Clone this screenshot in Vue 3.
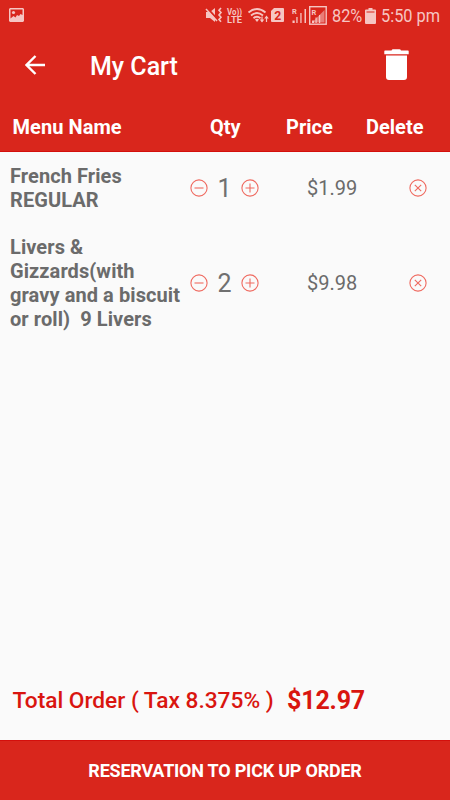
<template>
  <div class="app-container">
    <header class="top">
      <div class="status-bar">
        <svg class="picture" width="15" height="14" viewBox="0 0 15 14">
          <path fill-rule="evenodd" d="M1 0h13l1 1v12l-1 1H1l-1-1V1zM1.500 1.500v9l3-2.500 2 1.500L8 7l2 1 1.500-2 2 1V1.500z" />
          <circle cx="4.500" cy="4.500" r="1.600" />
        </svg>

        <svg class="indicators" width="124" height="20" viewBox="0 0 124 20">
          <!-- muted speaker -->
          <path d="M1 6h4l5-4v14l-5-4H1z" />
          <path class="cut" d="M1.500 1.500l13 14" />
          <path class="line" d="M1 3l11 12" stroke-width="1.500" />
          <path class="line" d="M16 2l-2 2.300 2 2.300-2 2.300 2 2.300-2 2.300 2 2.300" stroke-width="1.600" />
          <!-- VoLTE -->
          <text x="22" y="8.500" font-size="9" font-weight="700" textLength="15" lengthAdjust="spacingAndGlyphs">Vo))</text>
          <text x="22" y="17" font-size="9" font-weight="700" textLength="15" lengthAdjust="spacingAndGlyphs">LTE</text>
          <!-- wifi -->
          <path class="line" d="M43.500 6.500q8.500-7 17 0M46 9.500q6-5 12 0M48.500 12.200q3.500-3 7 0" stroke-width="1.800" />
          <path d="M50 13.500q2-1.500 4 0l-2 2.500z" />
          <path class="line" d="M57 10.500v5M61.500 16v-5" stroke-width="1.200" />
          <path d="M54.700 13.500h4.600L57 16.500zM59.200 12.500h4.600l-2.300-3z" />
          <!-- sim -->
          <path d="M69 2h9q1 0 1 1v12q0 1-1 1H67q-1 0-1-1V5z" />
          <text class="dark" x="69.300" y="13.500" font-size="12" font-weight="700" textLength="7" lengthAdjust="spacingAndGlyphs">2</text>
          <!-- signal 1 -->
          <text x="87" y="8" font-size="7.500" font-weight="700">R</text>
          <path d="M87.500 14.500h2.200V17h-2.200zM91.300 11h1.300v6h-1.300zM95.300 7h1.300v10h-1.300zM99.500 3h1.500v14h-1.500z" />
          <!-- signal 2 -->
          <rect class="line" x="104.700" y=".7" width="16.500" height="17.500" stroke-width="1.400" />
          <path d="M107 16.500L119.500 4v12.500z" opacity=".55" />
          <path d="M107 14.500h2V17h-2zM110.500 11.500h1.200V17h-1.200zM114 9h1.200v8H114z" />
          <text x="106.500" y="8.500" font-size="7.500" font-weight="700">R</text>
        </svg>

        <span class="percent">82%</span>
        <svg class="battery" width="11" height="16" viewBox="0 0 11 16">
          <path d="M3.500 0h4v1.500H10q1 0 1 1V15q0 1-1 1H1q-1 0-1-1V2.500q0-1 1-1h2.500z" />
          <path class="dark" d="M1.500 3.500h8v1h-8z" />
        </svg>
        <span class="clock">5:50 pm</span>
      </div>

      <div class="toolbar">
        <svg class="back" width="20" height="20" viewBox="0 0 20 20">
          <path d="M20 10H1.500M10.500 1L1.500 10l9 9" fill="none" stroke="#fff" stroke-width="2.400" />
        </svg>
        <h1>My Cart</h1>
        <svg class="trash" width="25" height="32" viewBox="0 0 25 32">
          <path d="M7.500 1.500Q8 .3 9 .3h6.500q1 0 1.500 1.200h7q.7 0 .7.700V5.200H.3V2.200q0-.7.700-.7zM2 6.500h21V28q0 3-3 3H5q-3 0-3-3z" fill="#fff" />
        </svg>
      </div>

      <div class="columns">
        <span class="col-name">Menu Name</span>
        <span class="col-qty">Qty</span>
        <span class="col-price">Price</span>
        <span>Delete</span>
      </div>
    </header>

    <main class="cart">
      <div v-for="item in items" :key="item.id" class="cart-row">
        <p class="item-name">{{ item.name }}</p>
        <div class="qty">
          <button @click="changeQty(item, -1)" aria-label="Less">
            <svg viewBox="0 0 18 18"><circle cx="9" cy="9" r="8.100" /><path d="M4.500 9h9" /></svg>
          </button>
          <span class="count">{{ item.qty }}</span>
          <button @click="changeQty(item, 1)" aria-label="More">
            <svg viewBox="0 0 18 18"><circle cx="9" cy="9" r="8.100" /><path d="M4.500 9h9M9 4.500v9" /></svg>
          </button>
        </div>
        <span class="price">${{ (item.unit * item.qty).toFixed(2) }}</span>
        <button class="remove" @click="removeItem(item.id)" aria-label="Delete">
          <svg viewBox="0 0 18 18"><circle cx="9" cy="9" r="8.100" /><path d="M5.800 5.800l6.400 6.400M12.200 5.800l-6.400 6.400" /></svg>
        </button>
      </div>
    </main>

    <div class="total">
      <span class="total-label">Total Order ( Tax {{ taxRate }}% )</span>
      <span class="total-value">${{ total }}</span>
    </div>

    <button class="reserve">RESERVATION TO PICK UP ORDER</button>
  </div>
</template>

<script setup>
import { ref, computed } from 'vue'

const taxRate = 8.375
const items = ref([
  { id: 1, name: 'French Fries REGULAR', unit: 1.99, qty: 1 },
  { id: 2, name: 'Livers & Gizzards(with gravy and a biscuit or roll)  9 Livers', unit: 4.99, qty: 2 }
])

const total = computed(() => {
  const sum = items.value.reduce((acc, item) => acc + item.unit * item.qty, 0)
  return (sum * (1 + taxRate / 100)).toFixed(2)
})

function changeQty(item, step) {
  item.qty = Math.max(1, item.qty + step)
}

function removeItem(id) {
  items.value = items.value.filter((item) => item.id !== id)
}
</script>

<style>
body {
  margin: 0;
}
</style>

<style scoped>
.app-container {
  display: flex;
  flex-direction: column;
  height: 100vh;
  background: #fafafa;
  font-family: Roboto, "Liberation Sans", sans-serif;
  overflow: hidden;
}

.top {
  box-sizing: border-box;
  height: 152px;
  background: #d9261c;
  border-bottom: 1px solid #d40f0c;
  color: #fff;
}

.status-bar {
  display: flex;
  align-items: flex-start;
  height: 32px;
  color: #f6c5c2;
  fill: #f6c5c2;
}

.picture {
  margin: 8px 0 0 9px;
}

.indicators {
  margin: 6px 0 0 181px;
}

/* narrow status bar lettering */
.percent,
.clock {
  font-size: 19px;
  line-height: 24px;
  white-space: nowrap;
  transform: scaleX(0.86);
  transform-origin: 0 0;
}

.percent {
  width: 33px;
  margin: 4px 0 0 3px;
}

.battery {
  margin: 8px 0 0;
}

.clock {
  margin: 4px 0 0 5px;
}

.line {
  fill: none;
  stroke: #f6c5c2;
}

.cut {
  fill: none;
  stroke: #d9261c;
  stroke-width: 2;
}

.dark {
  fill: #d9261c;
}

.toolbar {
  display: flex;
  align-items: center;
  height: 68px;
}

.back {
  margin: -2px 0 0 25px;
}

h1 {
  flex: 1;
  margin: 1px 0 0 45px;
  font-size: 25px;
  font-weight: 500;
  line-height: 30px;
}

.trash {
  margin: -2px 41px 0 0;
}

.columns {
  display: flex;
  padding: 15px 0 0 12.5px;
  font-size: 20px;
  font-weight: 700;
  line-height: 24px;
}

.col-name {
  width: 197.5px;
  letter-spacing: 0.06px;
}

.col-qty {
  width: 76px;
}

.col-price {
  width: 80px;
}

.cart {
  flex: 1;
}

.cart-row {
  display: flex;
  align-items: center;
  padding: 11.5px 0 11.5px 10px;
}

.item-name {
  width: 176px;
  margin: 0;
  color: #6b6b6b;
  font-size: 20px;
  font-weight: 700;
  letter-spacing: 0.08px;
  line-height: 24px;
  white-space: pre-wrap;
}

.qty {
  display: flex;
  align-items: center;
  width: 104px;
  margin-left: 4px;
}

button {
  padding: 0;
  border: 0;
  background: none;
  font-family: inherit;
  cursor: pointer;
}

.cart-row svg {
  display: block;
  width: 18px;
  height: 18px;
  fill: none;
  stroke: #ef6a60;
  stroke-width: 1.1;
}

.count {
  width: 33px;
  padding-top: 2px;
  color: #707070;
  font-size: 25px;
  line-height: 26px;
  text-align: center;
}

.price {
  width: 102px;
  margin-left: 13px;
  color: #6b6b6b;
  font-size: 20px;
}

.total {
  display: flex;
  align-items: center;
  height: 80px;
  padding-left: 12.5px;
  color: #d9150f;
}

.total-label {
  width: 274.5px;
  font-size: 22.7px;
  font-weight: 500;
}

.total-value {
  font-size: 25px;
  font-weight: 700;
  letter-spacing: -0.15px;
}

.reserve {
  height: 60px;
  background: #d9261c;
  border-top: 1px solid #d40f0c;
  color: #fff;
  font-size: 18px;
  font-weight: 700;
  letter-spacing: -0.22px;
}
</style>
